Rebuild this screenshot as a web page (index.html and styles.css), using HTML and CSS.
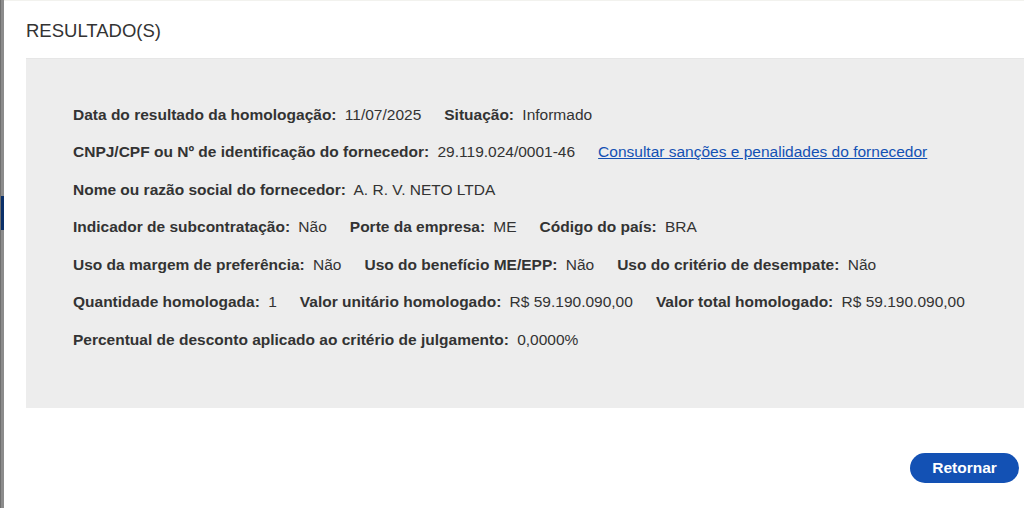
FILE: index.html
```html
<!DOCTYPE html>
<html lang="pt-BR">
<head>
<meta charset="utf-8">
<title>Resultado(s)</title>
<link rel="stylesheet" href="styles.css">
</head>
<body>
<div class="backdrop">
  <div class="bd-blue"></div>
</div>
<div class="modal">
  <h2 class="title">RESULTADO(S)</h2>
  <div class="panel">
    <div class="row">
      <span class="item"><b>Data do resultado da homologação:</b> 11/07/2025</span>
      <span class="item"><b>Situação:</b> Informado</span>
    </div>
    <div class="row">
      <span class="item"><b>CNPJ/CPF ou Nº de identificação do fornecedor:</b> 29.119.024/0001-46</span>
      <a class="link" href="#">Consultar sanções e penalidades do fornecedor</a>
    </div>
    <div class="row">
      <span class="item"><b>Nome ou razão social do fornecedor:</b> A. R. V. NETO LTDA</span>
    </div>
    <div class="row">
      <span class="item"><b>Indicador de subcontratação:</b> Não</span>
      <span class="item"><b>Porte da empresa:</b> ME</span>
      <span class="item"><b>Código do país:</b> BRA</span>
    </div>
    <div class="row">
      <span class="item"><b>Uso da margem de preferência:</b> Não</span>
      <span class="item"><b>Uso do benefício ME/EPP:</b> Não</span>
      <span class="item"><b>Uso do critério de desempate:</b> Não</span>
    </div>
    <div class="row">
      <span class="item"><b>Quantidade homologada:</b> 1</span>
      <span class="item"><b>Valor unitário homologado:</b> R$ 59.190.090,00</span>
      <span class="item"><b>Valor total homologado:</b> R$ 59.190.090,00</span>
    </div>
    <div class="row">
      <span class="item"><b>Percentual de desconto aplicado ao critério de julgamento:</b> 0,0000%</span>
    </div>
  </div>
  <div class="actions">
    <button class="btn" type="button">Retornar</button>
  </div>
</div>
</body>
</html>
```
FILE: styles.css
```css
html, body {
  margin: 0;
  padding: 0;
  height: 100%;
  overflow: hidden;
}
body {
  display: flex;
  background: #ffffff;
  font-family: "Liberation Sans", Arial, sans-serif;
  color: #333333;
}
.backdrop {
  width: 4px;
  flex: 0 0 4px;
  background: #8c8c8c;
  border-left: 1px solid #6f6f6f;
  box-sizing: border-box;
  padding-top: 196px;
}
.bd-blue {
  height: 34px;
  background: #0b3069;
}
.modal {
  flex: 1;
  background: #ffffff;
  border-top: 1px solid #f2f2ee;
  padding: 0 0 0 22px;
  display: flex;
  flex-direction: column;
}
.title {
  margin: 0;
  height: 57px;
  line-height: 60px;
  font-size: 18.5px;
  font-weight: normal;
  color: #333333;
}
.panel {
  background: #ededed;
  border-top: 1px solid #e6e6e6;
  height: 350px;
  box-sizing: border-box;
  padding: 37px 0 0 47px;
  display: flex;
  flex-direction: column;
}
.row {
  height: 37.5px;
  display: flex;
  align-items: center;
  gap: 23px;
  font-size: 15.5px;
  white-space: nowrap;
}
.item b {
  font-weight: bold;
  color: #333333;
  margin-right: 4px;
}
.link {
  color: #1351b4;
  text-decoration: underline;
}
.actions {
  display: flex;
  justify-content: flex-end;
  padding: 45px 5px 0 0;
}
.btn {
  background: #1351b4;
  color: #ffffff;
  border: none;
  border-radius: 16px;
  width: 109px;
  height: 30px;
  font-family: "Liberation Sans", Arial, sans-serif;
  font-size: 15.5px;
  font-weight: bold;
  padding: 0;
}
```
